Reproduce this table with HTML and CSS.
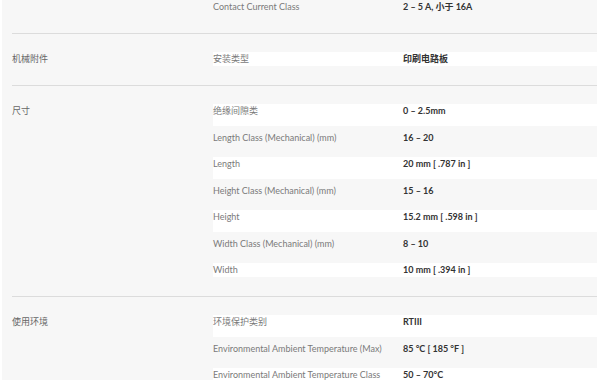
FILE: index.html
```html
<!DOCTYPE html>
<html lang="zh">
<head>
<meta charset="utf-8">
<link rel="stylesheet" href="styles.css">
</head>
<body>
<div class="specs">
  <section class="group first">
    <div class="group-label"></div>
    <div class="rows">
      <div class="row"><span class="name">Contact Current Class</span><span class="value">2 – 5 A, 小于 16A</span></div>
    </div>
  </section>
  <section class="group">
    <div class="group-label">机械附件</div>
    <div class="rows">
      <div class="row odd"><span class="name">安装类型</span><span class="value">印刷电路板</span></div>
    </div>
  </section>
  <section class="group">
    <div class="group-label">尺寸</div>
    <div class="rows">
      <div class="row odd"><span class="name">绝缘间隙类</span><span class="value">0 – 2.5mm</span></div>
      <div class="row"><span class="name">Length Class (Mechanical) (mm)</span><span class="value">16 – 20</span></div>
      <div class="row odd"><span class="name">Length</span><span class="value">20 mm [ .787 in ]</span></div>
      <div class="row"><span class="name">Height Class (Mechanical) (mm)</span><span class="value">15 – 16</span></div>
      <div class="row odd"><span class="name">Height</span><span class="value">15.2 mm [ .598 in ]</span></div>
      <div class="row"><span class="name">Width Class (Mechanical) (mm)</span><span class="value">8 – 10</span></div>
      <div class="row odd"><span class="name">Width</span><span class="value">10 mm [ .394 in ]</span></div>
    </div>
  </section>
  <section class="group">
    <div class="group-label">使用环境</div>
    <div class="rows">
      <div class="row odd"><span class="name">环境保护类别</span><span class="value">RTIII</span></div>
      <div class="row"><span class="name">Environmental Ambient Temperature (Max)</span><span class="value">85 °C [ 185 °F ]</span></div>
      <div class="row odd"><span class="name">Environmental Ambient Temperature Class</span><span class="value">50 – 70°C</span></div>
    </div>
  </section>
</div>
</body>
</html>
```

FILE: styles.css
```css
html, body {
  margin: 0;
  padding: 0;
  background: #ffffff;
}

body {
  font-family: Lato, "Noto Sans CJK SC", sans-serif;
  font-size: 9px;
  color: #777777;
}

.specs {
  margin-left: 2px;
  width: 595px;
  height: 380px;
  overflow: hidden;
  background: #f7f7f7;
}

.group {
  display: flex;
  margin-left: 10px;
  padding: 18px 0 19px;
  border-top: 1px solid #dcdcdc;
}

.group.first {
  border-top: none;
  padding-top: 0;
}

.group-label {
  width: 201px;
  flex: none;
  line-height: 14px;
  color: #666666;
}

.rows {
  flex: 1;
  display: flex;
  flex-direction: column;
  gap: 4.5px;
}

.row {
  display: flex;
  line-height: 14px;
  padding-bottom: 8px;
}

.row:last-child {
  padding-bottom: 0;
}

.row.odd {
  background: #ffffff;
}

.name {
  width: 190px;
  flex: none;
  color: #7a7a7a;
}

.value {
  font-weight: bold;
  color: #333333;
}
```
